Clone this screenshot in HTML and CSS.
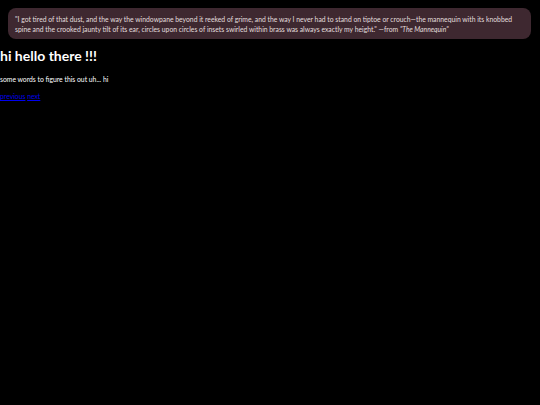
FILE: index.html
```html
<!DOCTYPE html>
<html>
<head>
<meta charset="utf-8">
<link rel="stylesheet" href="styles.css">
</head>
<body>
<blockquote class="quote">"I got tired of that dust, and the way the windowpane beyond it reeked of grime, and the way I never had to stand on tiptoe or crouch—the mannequin with its knobbed spine and the crooked jaunty tilt of its ear, circles upon circles of insets swirled within brass was always exactly my height." —from <em>"The Mannequin"</em></blockquote>
<h1 class="title">hi hello there !!!</h1>
<p class="text">some words to figure this out uh... hi</p>
<nav class="pager"><a href="#">previous</a> <a href="#">next</a></nav>
</body>
</html>
```
FILE: styles.css
```css
html, body {
  margin: 0;
  padding: 0;
  background: #000;
  color: #fff;
  font-family: Lato, "Open Sans", sans-serif;
}
.quote {
  margin: 8px 9px 0 8px;
  padding: 6px 16px 5px 7px;
  background: #3e2830;
  border-radius: 8px;
  color: #e2dede;
  font-size: 6.8px;
  line-height: 10px;
}
.title {
  margin: 8px 0 0 0;
  font-size: 14px;
  font-weight: 700;
  line-height: 18px;
}
.text {
  margin: 9px 0 0 0;
  font-size: 6.8px;
  line-height: 10px;
}
.pager {
  margin-top: 7px;
  font-size: 6.8px;
  line-height: 10px;
}
.pager a {
  color: #0000ee;
}
```
